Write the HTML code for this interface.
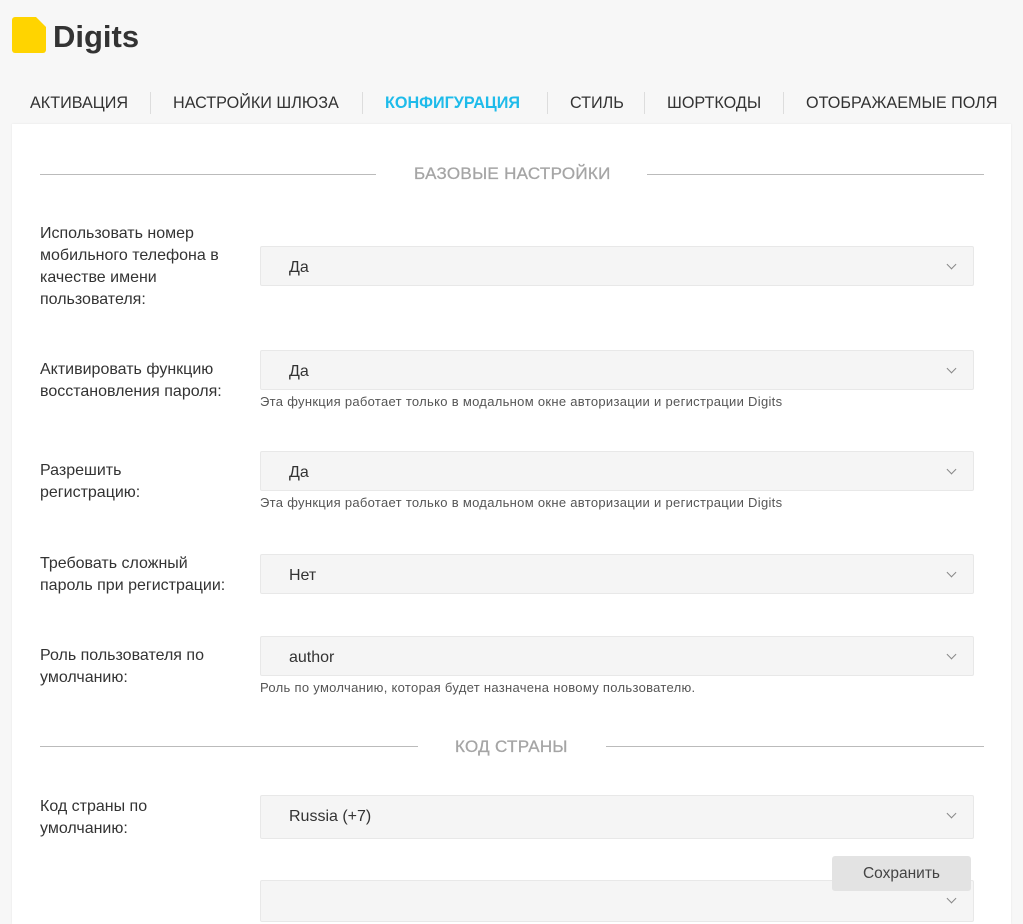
<!DOCTYPE html><html><head><meta charset="utf-8"><style>
body{margin:0;width:1023px;height:902px;overflow:hidden;background:#f7f7f7;font-family:"Liberation Sans",sans-serif;color:#333;position:relative}
.a{position:absolute}
.tab{position:absolute;top:94px;font-size:16.2px;color:#333;white-space:nowrap}
.sep{position:absolute;top:92px;width:1px;height:22px;background:#ddd}
.card{position:absolute;left:12px;top:124px;width:999px;height:800px;background:#fff;box-shadow:0 0 2px rgba(0,0,0,.08)}
.hl{position:absolute;height:1px;background:#bbb}
.h{position:absolute;font-size:17px;color:#a5a5a5;white-space:nowrap;letter-spacing:.3px;-webkit-text-stroke:.3px #a5a5a5}
.lb{position:absolute;left:40px;font-size:16px;line-height:22px;color:#333;white-space:nowrap}
.sel{position:absolute;left:260px;width:712px;height:38px;background:#f5f5f5;border:1px solid #e8e8e8;border-radius:2px;font-size:16px;line-height:41px;text-indent:28px;color:#333}
.sel:after{content:"";position:absolute;right:18px;top:14px;width:6px;height:6px;border-right:1.5px solid #888;border-bottom:1.5px solid #888;transform:rotate(45deg)}
.note{position:absolute;left:260px;font-size:13px;letter-spacing:.3px;color:#555}
</style></head><body>
<svg class="a" style="left:12px;top:17px" width="34" height="36"><path d="M3 0H24L34 10V33a3 3 0 0 1-3 3H3a3 3 0 0 1-3-3V3a3 3 0 0 1 3-3z" fill="#ffd400"/></svg>
<div class="a" style="left:53px;top:19px;font-size:31px;font-weight:bold;color:#333">Digits</div>
<div class="tab" style="left:30px">АКТИВАЦИЯ</div><div class="sep" style="left:150px"></div>
<div class="tab" style="left:173px">НАСТРОЙКИ ШЛЮЗА</div><div class="sep" style="left:362px"></div>
<div class="tab" style="left:385px;color:#1ebbea;font-weight:bold">КОНФИГУРАЦИЯ</div><div class="sep" style="left:547px"></div>
<div class="tab" style="left:570px">СТИЛЬ</div><div class="sep" style="left:644px"></div>
<div class="tab" style="left:667px">ШОРТКОДЫ</div><div class="sep" style="left:783px"></div>
<div class="tab" style="left:806px">ОТОБРАЖАЕМЫЕ ПОЛЯ</div>
<div class="card"></div>
<div class="hl" style="left:40px;top:174px;width:336px"></div>
<div class="h" style="left:414px;top:164px">БАЗОВЫЕ НАСТРОЙКИ</div>
<div class="hl" style="left:647px;top:174px;width:337px"></div>
<div class="lb" style="top:223px">Использовать номер<br>мобильного телефона в<br>качестве имени<br>пользователя:</div>
<div class="sel" style="top:246px">Да</div>
<div class="lb" style="top:359px">Активировать функцию<br>восстановления пароля:</div>
<div class="sel" style="top:350px">Да</div>
<div class="note" style="top:394px">Эта функция работает только в модальном окне авторизации и регистрации Digits</div>
<div class="lb" style="top:460px">Разрешить<br>регистрацию:</div>
<div class="sel" style="top:451px">Да</div>
<div class="note" style="top:495px">Эта функция работает только в модальном окне авторизации и регистрации Digits</div>
<div class="lb" style="top:553px">Требовать сложный<br>пароль при регистрации:</div>
<div class="sel" style="top:554px">Нет</div>
<div class="lb" style="top:645px">Роль пользователя по<br>умолчанию:</div>
<div class="sel" style="top:636px">author</div>
<div class="note" style="top:680px">Роль по умолчанию, которая будет назначена новому пользователю.</div>
<div class="hl" style="left:40px;top:746px;width:378px"></div>
<div class="h" style="left:455px;top:737px">КОД СТРАНЫ</div>
<div class="hl" style="left:606px;top:746px;width:378px"></div>
<div class="lb" style="top:796px">Код страны по<br>умолчанию:</div>
<div class="sel" style="top:795px;height:42px;line-height:42px">Russia (+7)</div>
<div class="sel" style="top:880px;height:40px"></div>
<div class="a" style="left:832px;top:856px;width:139px;height:35px;background:#e3e3e3;border-radius:3px;font-size:15.5px;line-height:36px;text-align:center;color:#444">Сохранить</div>
</body></html>
